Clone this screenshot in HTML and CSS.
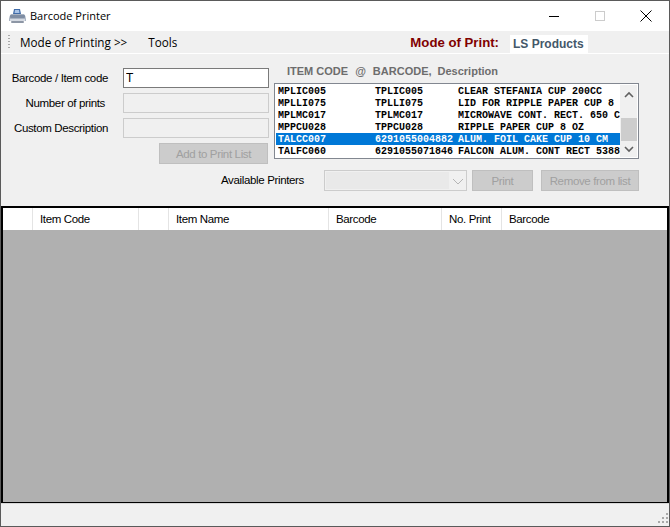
FILE: index.html
```html
<!DOCTYPE html>
<html lang="en">

<head>
    <meta charset="UTF-8">
    <title>Barcode Printer</title>
    <link rel="stylesheet" href="styles.css">
</head>

<body>
    <div class="window">
        <div class="titlebar">
            <svg class="app-icon" width="17" height="16" viewBox="0 0 17 16">
                <path d="M5 1 H11 L12 6 H4 Z" fill="#3f6ba8"/>
                <path d="M6 2 H10 L10.5 5 H5.5 Z" fill="#a9c3e6"/>
                <path d="M2 6 H15 Q17 8 17 11 V13 H0 V11 Q0 8 2 6 Z" fill="#a9b3c2"/>
                <rect x="1" y="7" width="15" height="3" rx="1" fill="#7f8da3"/>
                <rect x="1" y="11" width="15" height="2" fill="#d5dae2"/>
                <rect x="2" y="13" width="13" height="2" rx="1" fill="#8d96a5"/>
            </svg>
            <span class="title">Barcode Printer</span>
            <div class="controls">
                <svg class="ctl" width="46" height="30" viewBox="0 0 46 30"><path d="M18 15.5 H28" stroke="#000" fill="none"/></svg>
                <svg class="ctl" width="46" height="30" viewBox="0 0 46 30"><rect x="18.5" y="10.5" width="9" height="9" stroke="#ccc" fill="none"/></svg>
                <svg class="ctl" width="46" height="30" viewBox="0 0 46 30"><path d="M17.5 9.5 L28.5 20.5 M28.5 9.5 L17.5 20.5" stroke="#000" fill="none"/></svg>
            </div>
        </div>

        <div class="menubar">
            <div class="grip"></div>
            <span class="menu-item">Mode of Printing &gt;&gt;</span>
            <span class="menu-item">Tools</span>
            <span class="mode-label">Mode of Print:</span>
            <span class="mode-value">LS Products</span>
        </div>

        <div class="form-area">
            <div class="left-col">
                <div class="field">
                    <label class="lbl lbl-code">Barcode / Item code</label>
                    <input class="txt txt-active" type="text" value="T">
                </div>
                <div class="field">
                    <label class="lbl lbl-num">Number of prints</label>
                    <input class="txt" type="text" disabled>
                </div>
                <div class="field">
                    <label class="lbl lbl-desc">Custom Description</label>
                    <input class="txt" type="text" disabled>
                </div>
                <button class="btn btn-add" disabled>Add to Print List</button>
            </div>

            <div class="right-col">
                <div class="list-head">
                    <span>ITEM CODE</span><span class="at">@</span><span>BARCODE,</span><span class="desc">Description</span>
                </div>
                <div class="listbox">
                    <div class="rows">
                        <div class="row"><span class="c1">MPLIC005</span><span class="c2">TPLIC005</span><span>CLEAR STEFANIA CUP 200CC</span></div>
                        <div class="row"><span class="c1">MPLLI075</span><span class="c2">TPLLI075</span><span>LID FOR RIPPLE PAPER CUP 8</span></div>
                        <div class="row"><span class="c1">MPLMC017</span><span class="c2">TPLMC017</span><span>MICROWAVE CONT. RECT. 650 C</span></div>
                        <div class="row"><span class="c1">MPPCU028</span><span class="c2">TPPCU028</span><span>RIPPLE PAPER CUP 8 OZ</span></div>
                        <div class="row selected"><span class="c1">TALCC007</span><span class="c2">6291055004882</span><span>ALUM. FOIL CAKE CUP 10 CM</span></div>
                        <div class="row"><span class="c1">TALFC060</span><span class="c2">6291055071846</span><span>FALCON ALUM. CONT RECT 5388</span></div>
                    </div>
                    <div class="scrollbar">
                        <svg width="16" height="20" viewBox="0 0 16 20"><path d="M4 12 L8 8 L12 12" stroke="#606060" stroke-width="1.6" fill="none"/></svg>
                        <div class="thumb"></div>
                        <svg width="16" height="16" viewBox="0 0 16 16"><path d="M4 6 L8 10 L12 6" stroke="#606060" stroke-width="1.6" fill="none"/></svg>
                    </div>
                </div>
            </div>

            <div class="printer-row">
                <label class="lbl lbl-printers">Available Printers</label>
                <div class="combo">
                    <div class="combo-text"></div>
                    <svg width="16" height="19" viewBox="0 0 16 19"><path d="M3 7 L8 12 L13 7" stroke="#b5b5b5" fill="none"/></svg>
                </div>
                <button class="btn btn-print" disabled>Print</button>
                <button class="btn btn-remove" disabled>Remove from list</button>
            </div>
        </div>

        <div class="grid">
            <div class="grid-head">
                <div class="col col-a"></div>
                <div class="col col-b">Item Code</div>
                <div class="col col-c"></div>
                <div class="col col-d">Item Name</div>
                <div class="col col-e">Barcode</div>
                <div class="col col-f">No. Print</div>
                <div class="col col-g">Barcode</div>
            </div>
            <div class="grid-body"></div>
        </div>

        <div class="statusbar">
            <svg width="11" height="11" viewBox="0 0 11 11" fill="#a8a8a8">
                <rect x="8" y="0" width="2" height="2"/>
                <rect x="4" y="4" width="2" height="2"/><rect x="8" y="4" width="2" height="2"/>
                <rect x="0" y="8" width="2" height="2"/><rect x="4" y="8" width="2" height="2"/><rect x="8" y="8" width="2" height="2"/>
            </svg>
        </div>
    </div>
</body>

</html>
```

FILE: styles.css
```css
html,
body {
    margin: 0;
    padding: 0;
    height: 100%;
    overflow: hidden;
}

body {
    font-family: "Liberation Sans", Arial, sans-serif;
    font-size: 12px;
    color: #000;
}

.window {
    box-sizing: border-box;
    width: 670px;
    height: 527px;
    border: 1px solid #5a5a5a;
    background-color: #f0f0f0;
    display: flex;
    flex-direction: column;
}

.titlebar {
    height: 30px;
    background-color: #fff;
    display: flex;
    align-items: center;
    padding-left: 8px;
}

.app-icon {
    margin-right: 4px;
}

.title {
    font-family: "Open Sans", sans-serif;
    font-size: 11px;
    margin-bottom: 2px;
}

.controls {
    margin-left: auto;
    display: flex;
    height: 30px;
}

.ctl {
    display: block;
}

.menubar {
    height: 22px;
    background-color: #f0f0f0;
    border-bottom: 1px solid #fff;
    display: flex;
    align-items: center;
    font-family: "Open Sans", sans-serif;
    font-size: 11.7px;
}

.grip {
    width: 2px;
    height: 14px;
    margin-left: 7px;
    margin-right: 10px;
    background-image: linear-gradient(#a8a8a8 50%, transparent 50%);
    background-size: 2px 3px;
}

.menu-item {
    margin-right: 21px;
}

.mode-label {
    margin-left: auto;
    font-family: "Liberation Sans", sans-serif;
    font-weight: bold;
    font-size: 13.2px;
    color: #800000;
}

.mode-value {
    width: 78px;
    height: 18px;
    line-height: 19px;
    box-sizing: border-box;
    margin-top: 3px;
    margin-left: 11px;
    margin-right: 81px;
    padding-left: 3px;
    background-color: #fff;
    font-family: "Liberation Sans", sans-serif;
    font-weight: bold;
    font-size: 12px;
    color: #44586a;
}

.form-area {
    height: 152px;
    box-sizing: border-box;
    padding-top: 10px;
    display: grid;
    grid-template-columns: 273px 1fr;
    grid-template-rows: auto 1fr;
}

.left-col {
    display: flex;
    flex-direction: column;
    gap: 5px;
    padding-top: 4px;
}

.field {
    display: flex;
    align-items: center;
    justify-content: flex-end;
    padding-right: 5px;
}

.lbl {
    color: #000;
    font-size: 11.5px;
    letter-spacing: -0.35px;
}

.lbl-code {
    margin-right: 15px;
}

.lbl-num {
    margin-right: 18px;
}

.lbl-desc {
    margin-right: 15px;
}

.txt {
    box-sizing: border-box;
    width: 146px;
    height: 20px;
    padding: 0 2px;
    border: 1px solid #ccc;
    background-color: #f0f0f0;
    font-family: "Liberation Sans", sans-serif;
    font-size: 12px;
    outline: none;
}

.txt-active {
    border-color: #7a7a7a;
    background-color: #fff;
}

.btn {
    box-sizing: border-box;
    height: 21px;
    border: 1px solid #bfbfbf;
    background-color: #cccccc;
    color: #a0a0a0;
    font-family: "Liberation Sans", sans-serif;
    font-size: 11.5px;
    letter-spacing: -0.35px;
    padding: 0;
}

.btn-add {
    align-self: flex-start;
    width: 109px;
    margin-left: 158px;
}

.list-head {
    height: 14px;
    margin-bottom: 5px;
    padding-left: 13px;
    display: flex;
    align-items: center;
    font-weight: bold;
    font-size: 11px;
    color: #6d6d6d;
}

.at {
    margin: 0 7px;
}

.desc {
    margin-left: 6px;
}

.listbox {
    box-sizing: border-box;
    width: 365px;
    height: 76px;
    border: 1px solid #828790;
    background-color: #fff;
    display: flex;
    padding: 1px;
}

.rows {
    width: 344px;
    overflow: hidden;
}

.row {
    height: 12px;
    line-height: 14px;
    padding-left: 2px;
    display: flex;
    white-space: nowrap;
    font-family: "Liberation Mono", monospace;
    font-weight: bold;
    font-size: 10px;
}

.row.selected {
    background-color: #0078d7;
    color: #fff;
}

.c1 {
    width: 97px;
    flex: none;
}

.c2 {
    width: 83px;
    flex: none;
}

.scrollbar {
    width: 17px;
    display: flex;
    flex-direction: column;
    align-items: center;
    justify-content: space-between;
    position: relative;
    background-color: #f0f0f0;
}

.thumb {
    position: absolute;
    top: 33px;
    width: 16px;
    height: 23px;
    background-color: #cdcdcd;
}

.printer-row {
    grid-column: 1 / 3;
    display: flex;
    align-items: flex-start;
    padding-left: 220px;
    padding-top: 6px;
}

.lbl-printers {
    width: 103px;
    line-height: 21px;
}

.combo {
    box-sizing: border-box;
    width: 143px;
    height: 21px;
    border: 1px solid #ccc;
    background-color: #f0f0f0;
    display: flex;
    justify-content: space-between;
    padding: 1px 0 1px 1px;
}

.combo-text {
    width: 123px;
    height: 17px;
    background-color: #e9e9e9;
}

.btn-print {
    width: 61px;
    margin-left: 5px;
}

.btn-remove {
    width: 98px;
    margin-left: 8px;
}

.grid {
    flex: 1;
    border: 2px solid #000;
    border-bottom-width: 1px;
    display: flex;
    flex-direction: column;
    min-height: 0;
}

.grid-head {
    height: 22px;
    background-color: #fff;
    display: flex;
    flex: none;
}

.col {
    box-sizing: border-box;
    height: 22px;
    line-height: 22px;
    padding-left: 7px;
    border-right: 1px solid #e4e4e4;
    font-size: 11.5px;
    letter-spacing: -0.35px;
}

.col-a {
    width: 30px;
}

.col-b {
    width: 106px;
}

.col-c {
    width: 30px;
}

.col-d {
    width: 160px;
}

.col-e {
    width: 113px;
}

.col-f {
    width: 60px;
}

.col-g {
    flex: 1;
    border-right: none;
}

.grid-body {
    flex: 1;
    background-color: #b0b0b0;
}

.statusbar {
    height: 23px;
    box-sizing: border-box;
    border-top: 1px solid #d7d7d7;
    background-color: #f0f0f0;
    display: flex;
    justify-content: flex-end;
    align-items: flex-end;
    padding: 0 0 2px 0;
}
```
